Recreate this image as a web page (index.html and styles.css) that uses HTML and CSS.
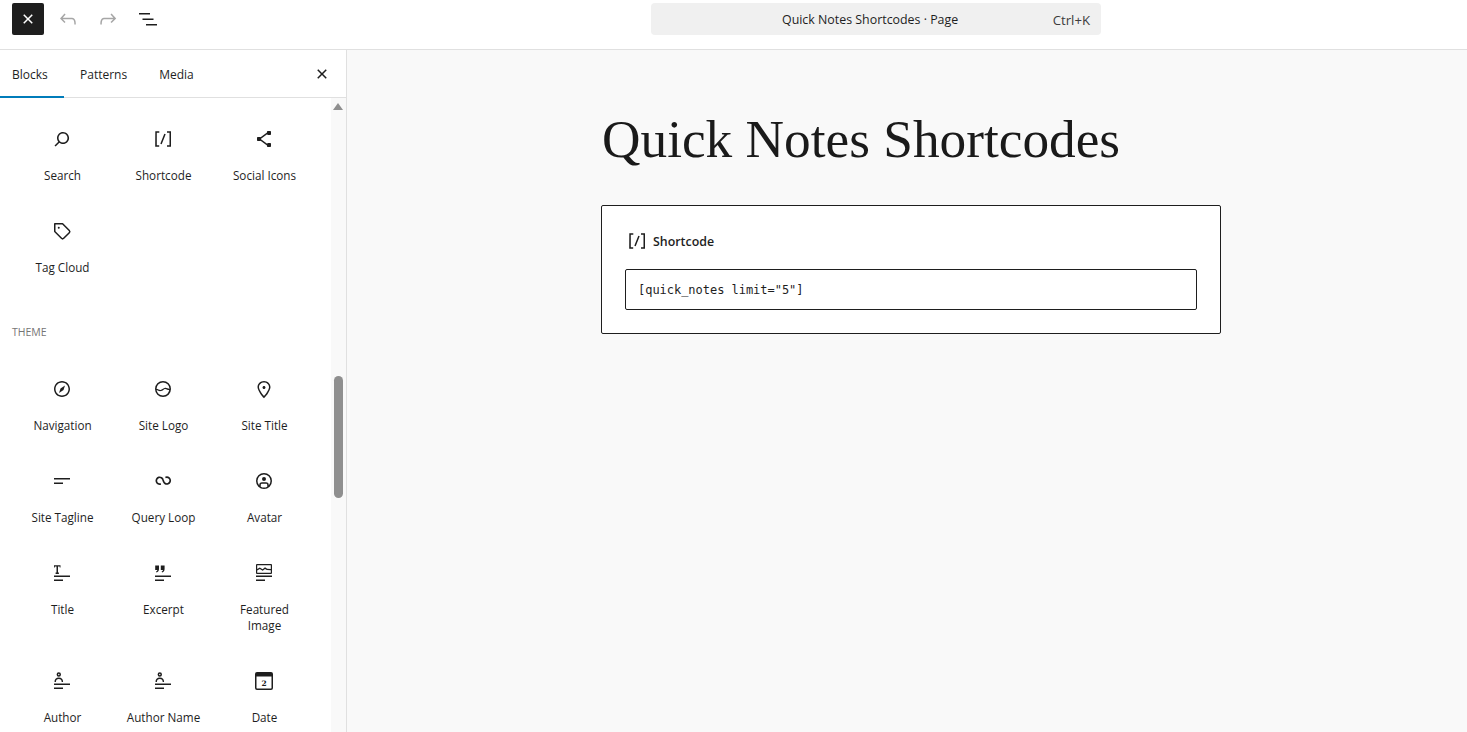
FILE: index.html
```html
<!DOCTYPE html>
<html lang="en">
<head>
<meta charset="utf-8">
<title>Quick Notes Shortcodes</title>
<link rel="stylesheet" href="styles.css">
</head>
<body>
<header class="topbar">
  <div class="tools">
    <button class="tool tool-close" aria-label="Close"><svg viewBox="0 0 24 24" width="24" height="24"><path d="M12 13.06l3.712 3.713 1.061-1.06L13.061 12l3.712-3.712-1.06-1.06L12 10.938 8.288 7.227l-1.061 1.06L10.939 12l-3.712 3.712 1.06 1.061L12 13.061z"/></svg></button>
    <button class="tool tool-muted" aria-label="Undo"><svg viewBox="0 0 24 24" width="24" height="24"><path d="M18.3 11.7c-.6-.6-1.4-.9-2.3-.9H6.7l2.9-3.3-1.1-1-4.5 5L8.5 16l1-1-2.7-2.7H16c.5 0 .9.2 1.3.5 1 1 1 3.4 1 4.5v.3h1.5v-.2c0-1.5 0-4.3-1.5-5.7z"/></svg></button>
    <button class="tool tool-muted" aria-label="Redo"><svg viewBox="0 0 24 24" width="24" height="24"><path d="M15.6 6.5l-1.1 1 2.9 3.3H8c-.9 0-1.7.3-2.3.9-1.4 1.5-1.4 4.2-1.4 5.6v.2h1.5v-.3c0-1.1 0-3.5 1-4.5.3-.3.7-.5 1.3-.5h9.2L14.5 15l1.1 1.1 4.6-4.6-4.6-5z"/></svg></button>
    <button class="tool" aria-label="Document overview"><svg viewBox="0 0 24 24" width="24" height="24"><path d="M3 6h11v1.5H3V6Zm3.5 5.5h11V13h-11v-1.5ZM21 17H10v1.5h11V17Z"/></svg></button>
  </div>
  <div class="command">
    <span class="command-title">Quick Notes Shortcodes · Page</span>
    <span class="command-key">Ctrl+K</span>
  </div>
</header>
<div class="workspace">
  <aside class="inserter">
    <nav class="tabs">
      <span class="tab tab-active">Blocks</span>
      <span class="tab">Patterns</span>
      <span class="tab">Media</span>
      <span class="tabs-close"><svg viewBox="0 0 24 24" width="24" height="24"><path d="M12 13.06l3.712 3.713 1.061-1.06L13.061 12l3.712-3.712-1.06-1.06L12 10.938 8.288 7.227l-1.061 1.06L10.939 12l-3.712 3.712 1.06 1.061L12 13.061z"/></svg></span>
    </nav>
    <div class="panel">
      <div class="scroller">
        <div class="grid">
          <div class="item"><svg viewBox="0 0 24 24" width="24" height="24"><path d="M13 5c-3.3 0-6 2.7-6 6 0 1.4.5 2.7 1.3 3.7l-3.8 3.8 1.1 1.1 3.8-3.8c1 .8 2.3 1.3 3.7 1.3 3.3 0 6-2.7 6-6S16.3 5 13 5zm0 10.5c-2.5 0-4.5-2-4.5-4.5s2-4.5 4.5-4.5 4.5 2 4.5 4.5-2 4.5-4.5 4.5z"/></svg><span class="label">Search</span></div>
          <div class="item"><svg viewBox="0 0 24 24" width="24" height="24"><path d="M16 4.2v1.5h2.5v12.5H16v1.5h4V4.2h-4zM4.2 19.8h4v-1.5H5.8V5.8h2.5V4.2h-4l-.1 15.6zm5.1-3.1l1.4.6 4-10-1.4-.6-4 10z"/></svg><span class="label">Shortcode</span></div>
          <div class="item"><svg viewBox="0 0 24 24" width="24" height="24"><path d="M9 11.8l6.1-4.5c.1.4.4.7.9.7h2c.6 0 1-.4 1-1V5c0-.6-.4-1-1-1h-2c-.6 0-1 .4-1 1v.4l-6.4 4.8c-.2-.1-.4-.2-.6-.2H6c-.6 0-1 .4-1 1v2c0 .6.4 1 1 1h2c.2 0 .4-.1.6-.2l6.4 4.8v.4c0 .6.4 1 1 1h2c.6 0 1-.4 1-1v-2c0-.6-.4-1-1-1h-2c-.5 0-.8.3-.9.7L9 12.2v-.4z"/></svg><span class="label">Social Icons</span></div>
          <div class="item"><svg viewBox="0 0 24 24" width="24" height="24"><path d="M4.75 4a.75.75 0 0 0-.75.75v7.826c0 .2.08.39.22.53l6.72 6.716a2.313 2.313 0 0 0 3.276-.001l5.61-5.611-.531-.53.532.528a2.315 2.315 0 0 0 0-3.264L13.104 4.22a.75.75 0 0 0-.53-.22H4.75ZM19 12.576a.815.815 0 0 1-.236.574l-5.61 5.611a.814.814 0 0 1-1.153 0L5.5 12.264V5.5h6.763l6.5 6.502a.816.816 0 0 1 .237.574ZM8.75 9.75a1 1 0 1 0 0-2 1 1 0 0 0 0 2Z"/></svg><span class="label">Tag Cloud</span></div>
        </div>
        <h2 class="group-title">Theme</h2>
        <div class="grid">
          <div class="item"><svg viewBox="0 0 24 24" width="24" height="24"><path d="M12 4c-4.4 0-8 3.6-8 8s3.6 8 8 8 8-3.6 8-8-3.6-8-8-8zm0 14.5c-3.6 0-6.5-2.9-6.5-6.5S8.4 5.5 12 5.5s6.5 2.9 6.5 6.5-2.9 6.5-6.5 6.5zM9 16l4.5-3L15 8.4l-4.5 3L9 16z"/></svg><span class="label">Navigation</span></div>
          <div class="item"><svg viewBox="0 0 24 24" width="24" height="24"><path fill-rule="evenodd" d="M12 4a8 8 0 1 0 0 16 8 8 0 0 0 0-16Zm0 1.500a6.500 6.500 0 0 1 6.500 6.300c-.8.100-1.400-.200-2.100-.500-.8-.300-1.700-.700-2.800-.400-.9.200-1.500.700-2.100 1.100-.6.400-1.100.800-1.800.900-.8.100-1.500-.200-2.200-.500-.6-.300-1.300-.600-2-.600A6.500 6.500 0 0 1 12 5.500Zm0 13a6.500 6.500 0 0 1-6.400-5.400c.4 0 .8.200 1.300.400.8.400 1.800.800 3 .600 1-.100 1.700-.600 2.400-1.100.6-.400 1.100-.800 1.600-.900.600-.200 1.200.100 1.900.400.700.300 1.500.600 2.400.600A6.500 6.500 0 0 1 12 18.500Z"/></svg><span class="label">Site Logo</span></div>
          <div class="item"><svg viewBox="0 0 24 24" width="24" height="24"><path d="M12 9c-.8 0-1.500.7-1.500 1.500S11.200 12 12 12s1.500-.7 1.500-1.500S12.800 9 12 9zm0-5c-3.600 0-6.500 2.800-6.500 6.200 0 .8.300 1.800.9 3.100.5 1.100 1.200 2.300 2 3.600.7 1 3 3.800 3.200 3.900l.4.500.4-.5c.2-.2 2.600-2.900 3.200-3.900.8-1.200 1.500-2.500 2-3.600.6-1.300.9-2.300.9-3.100C18.500 6.800 15.600 4 12 4zm4.300 8.700c-.5 1-1.100 2.200-1.900 3.400-.5.7-1.700 2.200-2.400 3-.7-.8-1.900-2.300-2.400-3-.8-1.200-1.400-2.300-1.900-3.300-.6-1.400-.7-2.200-.7-2.500 0-2.600 2.200-4.700 5-4.700s5 2.100 5 4.700c0 .2-.1 1-.7 2.400z"/></svg><span class="label">Site Title</span></div>
          <div class="item"><svg viewBox="0 0 24 24" width="24" height="24"><path d="M4 10.500h16V9H4v1.500ZM4 15h9v-1.500H4V15Z"/></svg><span class="label">Site Tagline</span></div>
          <div class="item"><svg viewBox="0 0 24 24" width="24" height="24"><path fill="none" stroke="currentColor" stroke-width="1.700" d="M9.800 14.900A3.400 3.400 0 1 1 12 10.800l.3.900.3.900a3.400 3.400 0 1 0 1.800-4.100"/></svg><span class="label">Query Loop</span></div>
          <div class="item"><svg viewBox="0 0 24 24" width="24" height="24"><path fill-rule="evenodd" d="M7.250 16.437a6.500 6.500 0 1 1 9.500 0V16A2.750 2.750 0 0 0 14 13.250h-4A2.750 2.750 0 0 0 7.250 16v.437Zm1.500 1.193a6.470 6.470 0 0 0 3.250.870 6.470 6.470 0 0 0 3.250-.870V16c0-.690-.560-1.250-1.250-1.250h-4c-.690 0-1.250.560-1.250 1.250v1.630ZM4 12a8 8 0 1 1 16 0 8 8 0 0 1-16 0Zm10-2a2 2 0 1 1-4 0 2 2 0 0 1 4 0Z"/></svg><span class="label">Avatar</span></div>
          <div class="item"><svg viewBox="0 0 24 24" width="24" height="24"><path d="M4 14.500h16V16H4zM4 18.500h9V20H4zM4 4.200h6.500v2.300H9.700V5.400H8v6.200h.9V13H5.600v-1.400h.9V5.400H4.800v1.100H4z"/></svg><span class="label">Title</span></div>
          <div class="item"><svg viewBox="0 0 24 24" width="24" height="24"><path d="M4 14.500h16V16H4zM4 18.500h9V20H4zM4.200 4.500h3.800v3.600c0 1.700-.9 2.900-2.500 3.400l-.5-1c.8-.3 1.300-.8 1.400-1.600H4.200zM9.800 4.500h3.800v3.600c0 1.700-.9 2.900-2.500 3.400l-.5-1c.8-.3 1.300-.8 1.400-1.600H9.800z"/></svg><span class="label">Excerpt</span></div>
          <div class="item"><svg viewBox="0 0 24 24" width="24" height="24"><path d="M4 14.500h16V16H4zM4 18.500h9V20H4z"/><path fill-rule="evenodd" d="M5 3h14a1 1 0 0 1 1 1v8a1 1 0 0 1-1 1H5a1 1 0 0 1-1-1V4a1 1 0 0 1 1-1Zm.2 1.200v3.900l2.600-1.700 2.800 1.800 2.400-2 2.200 1.600 3.600.1V4.200Zm0 5.300v2.300h13.600V9.300l-4-.2-1.800-1.200-2.300 1.900-2.900-1.900Z"/></svg><span class="label">Featured Image</span></div>
          <div class="item"><svg viewBox="0 0 24 24" width="24" height="24"><path d="M4 14.500h16V16H4zM4 18.500h9V20H4z"/><path fill-rule="evenodd" d="M8.800 3.300a2.200 2.200 0 1 1 0 4.400 2.200 2.200 0 0 1 0-4.400Zm0 1.500a.7.700 0 1 0 0 1.400.7.700 0 0 0 0-1.400ZM4.500 13c0-2.800 1.500-4.400 4.300-4.400s4.300 1.600 4.300 4.400h-1.400c0-2-1-3-2.900-3s-2.900 1-2.900 3Z"/></svg><span class="label">Author</span></div>
          <div class="item"><svg viewBox="0 0 24 24" width="24" height="24"><path d="M4 14.500h16V16H4zM4 18.500h9V20H4z"/><path fill-rule="evenodd" d="M8.800 3.300a2.200 2.200 0 1 1 0 4.400 2.200 2.200 0 0 1 0-4.400Zm0 1.500a.7.700 0 1 0 0 1.400.7.700 0 0 0 0-1.400ZM4.500 13c0-2.800 1.500-4.400 4.300-4.400s4.300 1.600 4.300 4.400h-1.400c0-2-1-3-2.900-3s-2.900 1-2.900 3Z"/></svg><span class="label">Author Name</span></div>
          <div class="item"><svg viewBox="0 0 24 24" width="24" height="24"><path fill-rule="evenodd" d="M5 3h14a2 2 0 0 1 2 2v14a2 2 0 0 1-2 2H5a2 2 0 0 1-2-2V5a2 2 0 0 1 2-2Zm-.5 4.500V19c0 .3.200.5.500.5h14c.3 0 .5-.2.500-.5V7.500Z"/><text class="date-digit" x="12" y="16.500" text-anchor="middle">2</text></svg><span class="label">Date</span></div>
        </div>
      </div>
      <div class="scrollbar">
        <span class="scroll-arrow"></span>
        <span class="scroll-thumb"></span>
      </div>
    </div>
  </aside>
  <main class="canvas">
    <div class="page">
      <h1 class="page-title">Quick Notes Shortcodes</h1>
      <section class="shortcode">
        <div class="shortcode-label"><svg viewBox="0 0 24 24" width="24" height="24"><path d="M16 4.200v1.500h2.500v12.500H16v1.500h4V4.200h-4zM4.200 19.800h4v-1.500H5.800V5.800h2.500V4.200h-4l-.1 15.600zm5.100-3.100l1.400.6 4-10-1.400-.6-4 10z"/></svg><span>Shortcode</span></div>
        <div class="shortcode-input">[quick_notes limit="5"]</div>
      </section>
    </div>
  </main>
</div>
</body>
</html>
```
FILE: styles.css
```css
* { box-sizing: border-box; }
html, body { margin: 0; height: 100%; overflow: hidden; }
body {
  font-family: "Open Sans", "Noto Sans", sans-serif;
  font-size: 12px;
  color: #1e1e1e;
  background: #fff;
  display: flex;
  flex-direction: column;
}
svg { display: block; fill: currentColor; flex: none; }

.topbar {
  height: 50px;
  flex: none;
  border-bottom: 1px solid #e0e0e0;
  padding: 3px 0 0 12px;
  display: flex;
  align-items: flex-start;
  position: relative;
}
.tools { display: flex; gap: 8px; }
.tool {
  width: 32px;
  height: 32px;
  padding: 0;
  border: 0;
  border-radius: 2px;
  background: transparent;
  color: #1e1e1e;
  display: flex;
  align-items: center;
  justify-content: center;
}
.tool-close { background: #1e1e1e; color: #fff; }
.tool-muted { color: #a6a6a6; }
.command {
  width: 450px;
  height: 32px;
  margin-left: 487px;
  background: #f0f0f0;
  border-radius: 4px;
  display: flex;
  align-items: center;
  padding: 0 11px 0 131px;
  font-size: 12.4px;
  justify-content: space-between;
}
.command-key { color: #3c3c3c; padding-top: 1px; font-size: 13.2px; }

.workspace { flex: 1; display: flex; min-height: 0; }
.inserter {
  width: 347px;
  flex: none;
  border-right: 1px solid #e0e0e0;
  display: flex;
  flex-direction: column;
  min-height: 0;
}
.tabs {
  height: 48px;
  flex: none;
  border-bottom: 1px solid #e0e0e0;
  display: flex;
  align-items: stretch;
}
.tab {
  display: flex;
  align-items: center;
  padding: 0 16px 0 12px;
  margin-right: 4px;
  height: 48px;
  font-size: 12px;
}
.tab-active { border-bottom: 2px solid #007cba; width: 64px; margin-right: 0; padding-top: 2px; }
.tabs .tab:nth-child(2) { padding-left: 16px; }
.tabs-close { margin-left: auto; margin-right: 12px; display: flex; align-items: center; }

.panel { flex: 1; display: flex; min-height: 0; }
.scroller { flex: 1; overflow: hidden; padding: 17px 16px 0 12px; }
.grid { display: grid; grid-template-columns: repeat(3, 101px); }
.item {
  padding: 12px 8px 24px;
  display: flex;
  flex-direction: column;
  align-items: center;
  gap: 16px;
  text-align: center;
}
.item svg { margin-right: 1px; }
.label { font-size: 11.7px; line-height: 16px; }
.date-digit { font: bold 7.500px "DejaVu Serif", serif; }
.group-title {
  margin: 24px 0 24px;
  font-size: 10.500px;
  line-height: 18px;
  font-weight: 400;
  text-transform: uppercase;
  color: #757575;
}
.scrollbar {
  width: 15px;
  flex: none;
  background: #f9f9f9;
  display: flex;
  flex-direction: column;
  align-items: center;
  padding-right: 1px;
}
.scroll-arrow {
  margin-top: 5px;
  border-left: 5px solid transparent;
  border-right: 5px solid transparent;
  border-bottom: 7px solid #8f8f8f;
}
.scroll-thumb {
  width: 9px;
  height: 122px;
  margin-top: 266px;
  border-radius: 5px;
  background: #8f8f8f;
}

.canvas { flex: 1; background: #f9f9f9; min-width: 0; }
.page { width: 620px; margin: 0 0 0 254px; }
.page-title {
  margin: 0;
  padding: 55px 0 0 1px;
  height: 155px;
  font-family: "Liberation Serif", serif;
  font-weight: 400;
  font-size: 53.3px;
  line-height: 70px;
  color: #1a1a1a;
  white-space: nowrap;
}
.shortcode {
  height: 129px;
  background: #fff;
  border: 1px solid #1e1e1e;
  border-radius: 2px;
  padding: 23px;
}
.shortcode-label {
  height: 24px;
  display: flex;
  align-items: center;
  gap: 4px;
  font-size: 12.4px;
  font-weight: 600;
}
.shortcode-input {
  margin-top: 16px;
  height: 41px;
  border: 1px solid #1e1e1e;
  border-radius: 2px;
  padding: 0 12px;
  display: flex;
  align-items: center;
  font-family: "DejaVu Sans Mono", monospace;
  font-size: 12px;
  letter-spacing: -0.03px;
}
```
